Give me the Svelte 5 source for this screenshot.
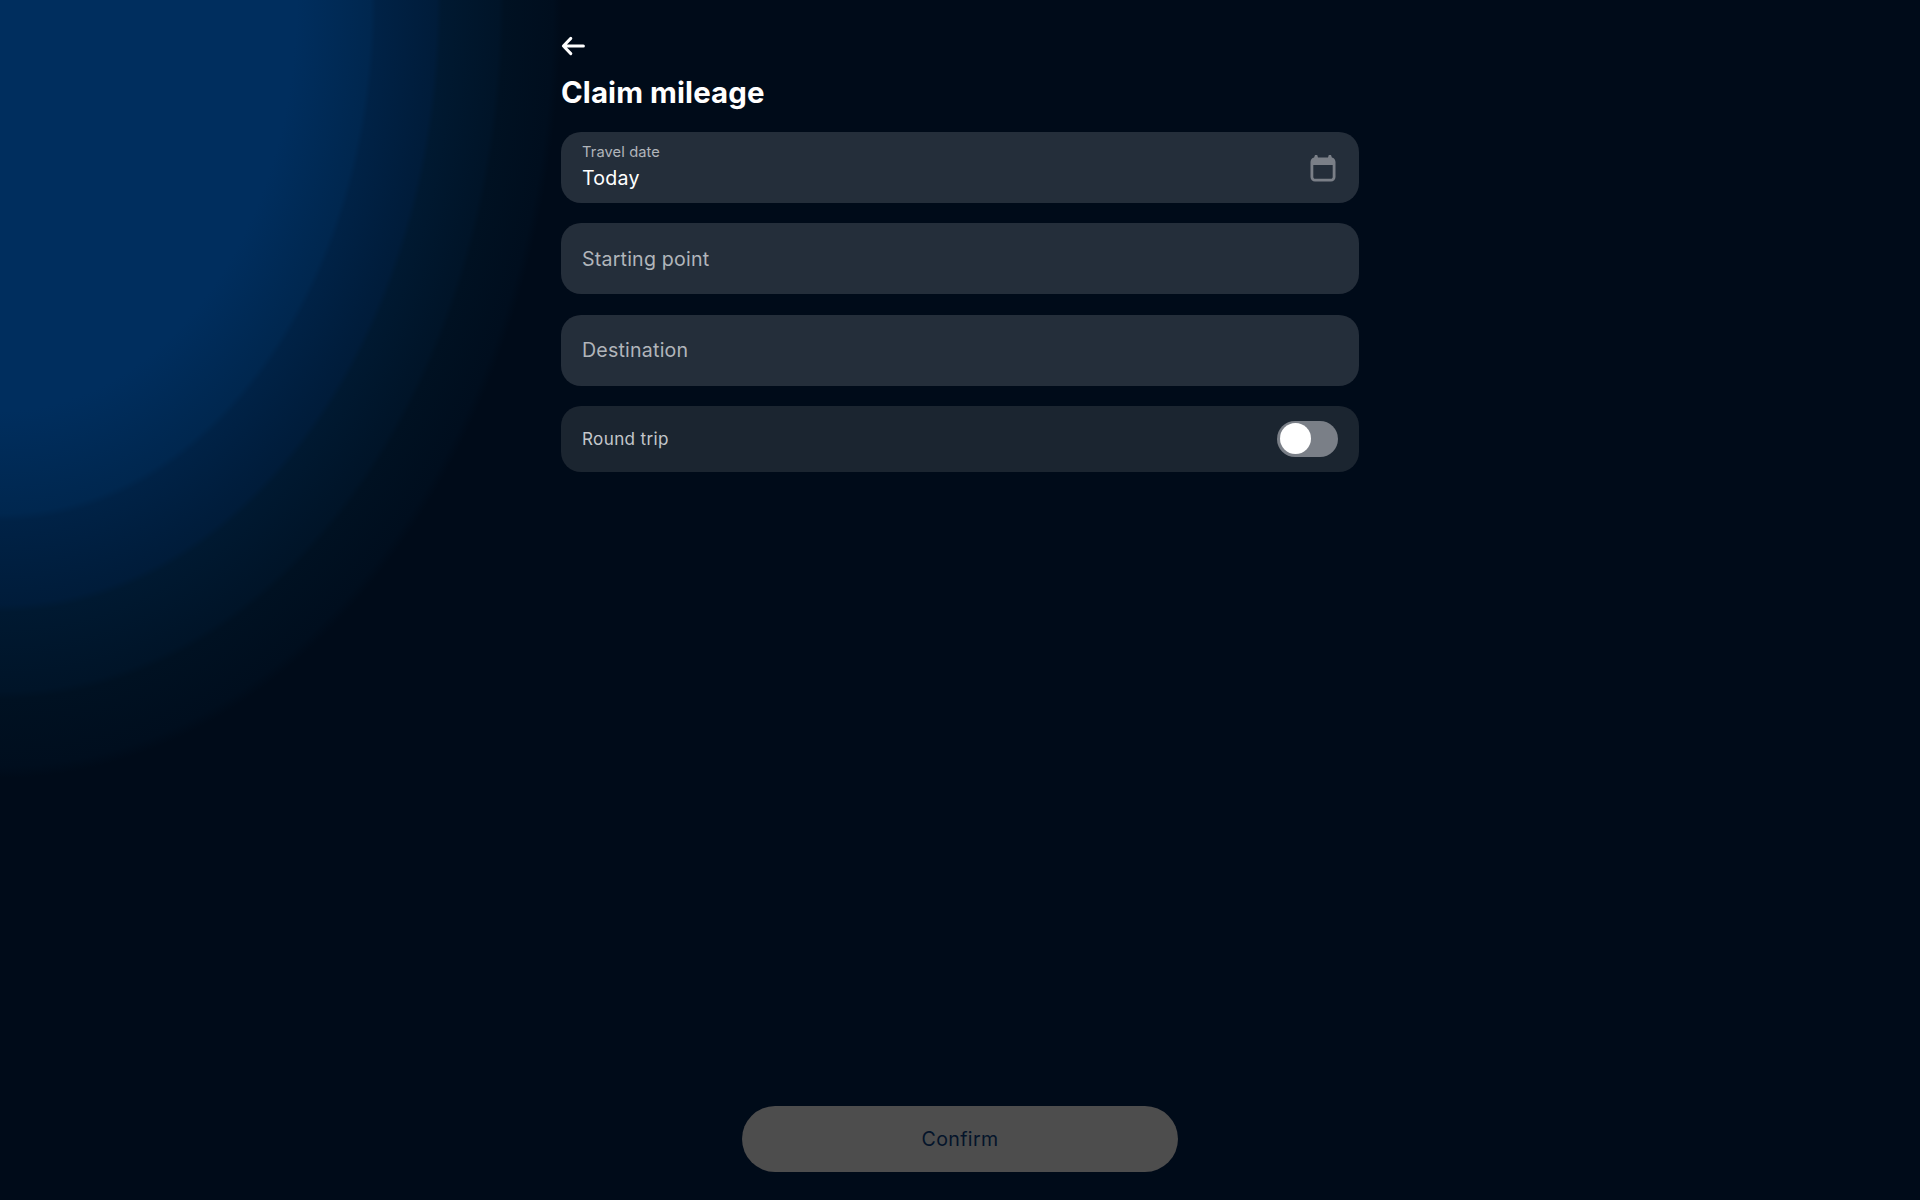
<script lang="ts">
	let roundTrip = $state(false);
</script>

<div class="page">
	<div class="form">
		<button class="back" aria-label="Back">
			<svg width="24" height="20" viewBox="0 0 24 20" fill="none" stroke="#fff" stroke-width="3" stroke-linecap="round" stroke-linejoin="round">
				<path d="M22.4 10H2.600M9.800 2.400 2.400 10l7.400 7.600" />
			</svg>
		</button>
		<h1>Claim mileage</h1>

		<div class="field date">
			<div class="date-text">
				<span class="label">Travel date</span>
				<span class="value">Today</span>
			</div>
			<svg class="cal" width="26" height="28" viewBox="0 0 26 28">
				<path fill="#7a7f87" d="M5 1h2.200l.8 2.400h10L18.800 1H21l.9 2.500C24 4 25.500 5.800 25.500 8v15c0 2.500-2 4.500-4.500 4.500H5C2.500 27.500.5 25.500.5 23V8C.5 5.800 2 4 4.100 3.500zM3.300 11v12c0 1 .8 1.800 1.800 1.800h15.800c1 0 1.800-.8 1.800-1.800V11z" />
			</svg>
		</div>

		<div class="field placeholder">Starting point</div>
		<div class="field placeholder">Destination</div>

		<div class="row">
			<span>Round trip</span>
			<button class="toggle" class:on={roundTrip} aria-label="Round trip" onclick={() => (roundTrip = !roundTrip)}>
				<span class="knob"></span>
			</button>
		</div>
	</div>

	<button class="confirm">Confirm</button>
</div>

<style>
	:global(body) {
		margin: 0;
		background: #000b19;
	}

	.page {
		min-height: 1200px;
		box-sizing: border-box;
		padding: 34px 0 28px;
		display: flex;
		flex-direction: column;
		align-items: center;
		font-family: Inter, "Liberation Sans", sans-serif;
		background:
			radial-gradient(570px 790px at 0 0,
				#002e5e 0%, #002e5e 52%,
				#00274f 65%, #002246 66%,
				#001c3a 76.500%, #001931 77.500%,
				#001428 87.500%, #001122 88.500%,
				#000e1e 97%, #000b19 98.500%);
	}

	.form {
		width: 798px;
		display: flex;
		flex-direction: column;
	}

	.back {
		align-self: flex-start;
		display: flex;
		width: 24px;
		height: 24px;
		padding: 0;
		margin-bottom: 17px;
		align-items: center;
		background: none;
		border: none;
		cursor: pointer;
	}

	h1 {
		margin: 0 0 21px;
		font-size: 29.400px;
		line-height: 36px;
		font-weight: 700;
		letter-spacing: 0.1px;
		color: #fff;
	}

	.field {
		height: 71px;
		box-sizing: border-box;
		padding: 0 21px;
		margin-bottom: 20.300px;
		border-radius: 20px;
		background: #242e3a;
		display: flex;
		align-items: center;
		justify-content: space-between;
	}

	.date-text {
		display: flex;
		flex-direction: column;
		gap: 3px;
		margin-top: -1px;
	}

	.label {
		font-size: 14.700px;
		line-height: 19px;
		letter-spacing: 0.1px;
		color: #b1b5ba;
	}

	.value {
		font-size: 19.600px;
		line-height: 26px;
		letter-spacing: 0.2px;
		color: #fff;
	}

	.cal {
		margin-right: 2px;
	}

	.placeholder {
		font-size: 19.600px;
		letter-spacing: 0.2px;
		color: #b1b5ba;
	}

	.row {
		height: 66px;
		box-sizing: border-box;
		padding: 0 21px;
		border-radius: 20px;
		background: #1b2530;
		display: flex;
		align-items: center;
		justify-content: space-between;
		font-size: 17.100px;
		letter-spacing: 0.35px;
		color: #c4c7cb;
	}

	.toggle {
		width: 61px;
		height: 36px;
		padding: 2.500px 3px;
		border: none;
		border-radius: 18px;
		background: #7a7f87;
		display: flex;
		cursor: pointer;
	}

	.toggle.on {
		justify-content: flex-end;
	}

	.knob {
		width: 31px;
		height: 31px;
		border-radius: 50%;
		background: #fff;
	}

	.confirm {
		width: 436px;
		height: 66px;
		margin-top: auto;
		border: none;
		border-radius: 33px;
		background: #4d4d4d;
		color: #04142a;
		font-family: inherit;
		font-size: 19.600px;
		letter-spacing: 0.35px;
		cursor: pointer;
	}
</style>
